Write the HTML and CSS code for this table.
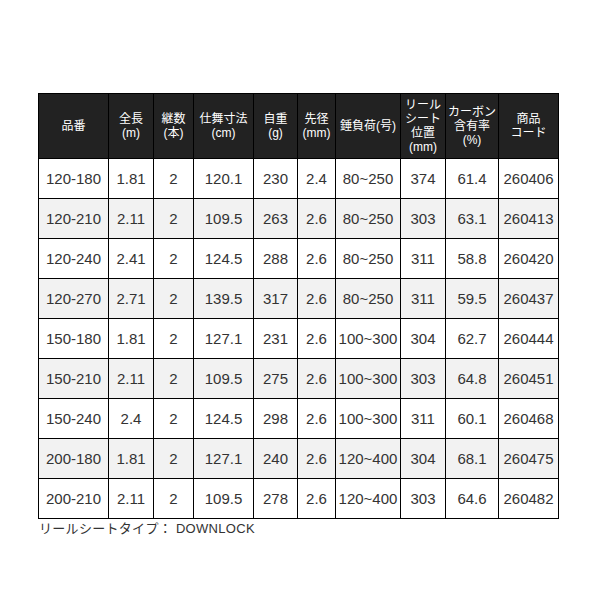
FILE: index.html
```html
<!DOCTYPE html>
<html lang="ja">
<head>
<meta charset="utf-8">
<link rel="stylesheet" href="styles.css">
</head>
<body>
<div class="page">
<table class="spec">
<colgroup>
<col class="c1"><col class="c2"><col class="c3"><col class="c4"><col class="c5"><col class="c6"><col class="c7"><col class="c8"><col class="c9"><col class="c10">
</colgroup>
<thead>
<tr>
<th>品番</th>
<th>全長<br>(m)</th>
<th>継数<br>(本)</th>
<th>仕舞寸法<br>(cm)</th>
<th>自重<br>(g)</th>
<th>先径<br>(mm)</th>
<th>錘負荷(号)</th>
<th>リール<br>シート<br>位置<br>(mm)</th>
<th>カーボン<br>含有率<br>(%)</th>
<th>商品<br>コード</th>
</tr>
</thead>
<tbody>
<tr><td>120-180</td><td>1.81</td><td>2</td><td>120.1</td><td>230</td><td>2.4</td><td>80~250</td><td>374</td><td>61.4</td><td>260406</td></tr>
<tr><td>120-210</td><td>2.11</td><td>2</td><td>109.5</td><td>263</td><td>2.6</td><td>80~250</td><td>303</td><td>63.1</td><td>260413</td></tr>
<tr><td>120-240</td><td>2.41</td><td>2</td><td>124.5</td><td>288</td><td>2.6</td><td>80~250</td><td>311</td><td>58.8</td><td>260420</td></tr>
<tr><td>120-270</td><td>2.71</td><td>2</td><td>139.5</td><td>317</td><td>2.6</td><td>80~250</td><td>311</td><td>59.5</td><td>260437</td></tr>
<tr><td>150-180</td><td>1.81</td><td>2</td><td>127.1</td><td>231</td><td>2.6</td><td>100~300</td><td>304</td><td>62.7</td><td>260444</td></tr>
<tr><td>150-210</td><td>2.11</td><td>2</td><td>109.5</td><td>275</td><td>2.6</td><td>100~300</td><td>303</td><td>64.8</td><td>260451</td></tr>
<tr><td>150-240</td><td>2.4</td><td>2</td><td>124.5</td><td>298</td><td>2.6</td><td>100~300</td><td>311</td><td>60.1</td><td>260468</td></tr>
<tr><td>200-180</td><td>1.81</td><td>2</td><td>127.1</td><td>240</td><td>2.6</td><td>120~400</td><td>304</td><td>68.1</td><td>260475</td></tr>
<tr><td>200-210</td><td>2.11</td><td>2</td><td>109.5</td><td>278</td><td>2.6</td><td>120~400</td><td>303</td><td>64.6</td><td>260482</td></tr>
</tbody>
</table>
<p class="note">リールシートタイプ： DOWNLOCK</p>
</div>
</body>
</html>
```
FILE: styles.css
```css
html, body {
  margin: 0;
  padding: 0;
  background: #fff;
}
.page {
  padding: 93px 0 0 38px;
  font-family: "Liberation Sans", "Noto Sans CJK JP", sans-serif;
  color: #222;
}
.spec {
  border-collapse: collapse;
  table-layout: fixed;
  width: 521px;
}
.c1 { width: 70px; }
.c2 { width: 45px; }
.c3 { width: 40px; }
.c4 { width: 60px; }
.c5 { width: 44px; }
.c6 { width: 38px; }
.c7 { width: 65px; }
.c8 { width: 45px; }
.c9 { width: 53px; }
.c10 { width: 60px; }
.spec th, .spec td {
  border: 1px solid #000;
  padding: 0;
  text-align: center;
  vertical-align: middle;
  white-space: nowrap;
  overflow: hidden;
}
.spec th {
  background: #222;
  color: #fff;
  font-weight: normal;
  font-size: 12px;
  line-height: 14px;
  height: 64px;
}
.spec td {
  height: 39px;
  font-size: 15px;
  color: #333;
}
.spec tbody tr:nth-child(even) td {
  background: #f2f2f2;
}
.note {
  margin: 2px 0 0 1px;
  font-size: 13px;
  line-height: 16px;
  letter-spacing: 0.3px;
  color: #333;
}
```
